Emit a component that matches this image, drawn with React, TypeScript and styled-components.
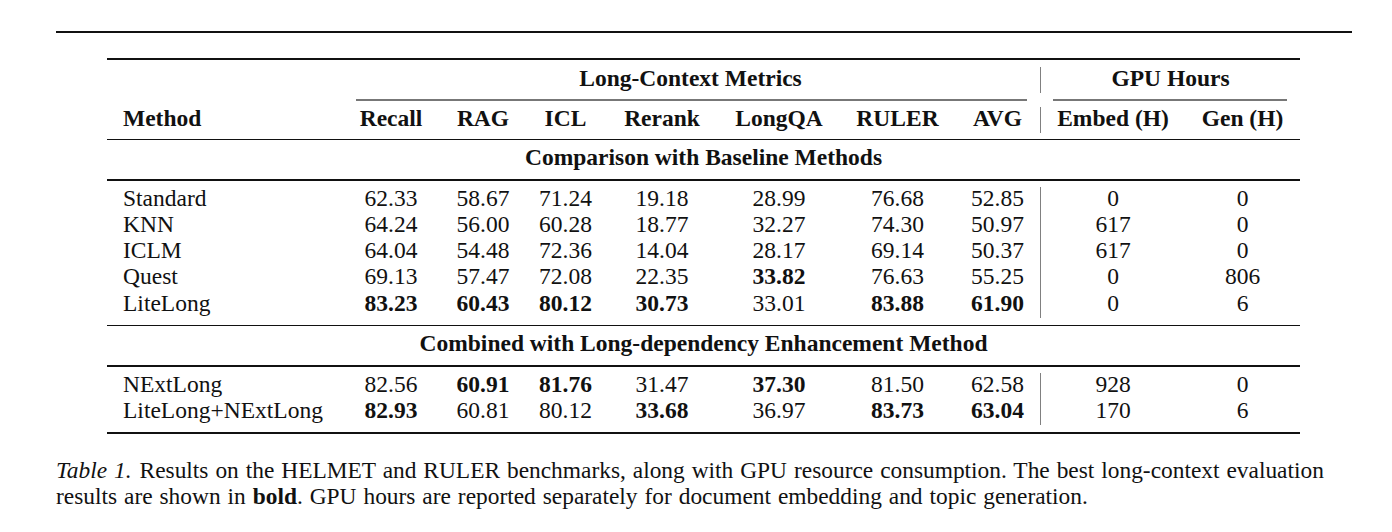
import styled, { createGlobalStyle } from 'styled-components';

const GlobalStyle = createGlobalStyle`
  body {
    margin: 0;
    background: #fff;
    color: #111;
    font-family: "Liberation Serif", "Times New Roman", serif;
  }
`;

interface ResultRow {
  method: string;
  values: string[];
  bold: number[];
  embed: string;
  gen: string;
}

const columnWidths = [234, 100, 84, 81, 112, 122, 115, 85, 145, 115];
const metrics = ['Recall', 'RAG', 'ICL', 'Rerank', 'LongQA', 'RULER', 'AVG'];

const baseline: ResultRow[] = [
  { method: 'Standard', values: ['62.33', '58.67', '71.24', '19.18', '28.99', '76.68', '52.85'], bold: [], embed: '0', gen: '0' },
  { method: 'KNN', values: ['64.24', '56.00', '60.28', '18.77', '32.27', '74.30', '50.97'], bold: [], embed: '617', gen: '0' },
  { method: 'ICLM', values: ['64.04', '54.48', '72.36', '14.04', '28.17', '69.14', '50.37'], bold: [], embed: '617', gen: '0' },
  { method: 'Quest', values: ['69.13', '57.47', '72.08', '22.35', '33.82', '76.63', '55.25'], bold: [4], embed: '0', gen: '806' },
  { method: 'LiteLong', values: ['83.23', '60.43', '80.12', '30.73', '33.01', '83.88', '61.90'], bold: [0, 1, 2, 3, 5, 6], embed: '0', gen: '6' },
];

const combined: ResultRow[] = [
  { method: 'NExtLong', values: ['82.56', '60.91', '81.76', '31.47', '37.30', '81.50', '62.58'], bold: [1, 2, 4], embed: '928', gen: '0' },
  { method: 'LiteLong+NExtLong', values: ['82.93', '60.81', '80.12', '33.68', '36.97', '83.73', '63.04'], bold: [0, 3, 5, 6], embed: '170', gen: '6' },
];

function Rule({ heavy, above = 6, below = 6 }: { heavy?: boolean; above?: number; below?: number }) {
  return (
    <tr>
      <RuleCell colSpan={10}>
        <Line $heavy={heavy} $above={above} $below={below} />
      </RuleCell>
    </tr>
  );
}

function DataRows({ rows }: { rows: ResultRow[] }) {
  return (
    <>
      {rows.map((row) => (
        <tr key={row.method}>
          <MethodCell>{row.method}</MethodCell>
          {row.values.map((v, i) => (
            <Cell key={metrics[i]} $bold={row.bold.includes(i)}>
              {v}
            </Cell>
          ))}
          <Cell $divider>{row.embed}</Cell>
          <Cell>{row.gen}</Cell>
        </tr>
      ))}
    </>
  );
}

export default function App() {
  return (
    <Page>
      <GlobalStyle />
      <PageRule />
      <Table>
        <colgroup>
          {columnWidths.map((w, i) => (
            <col key={i} style={{ width: w }} />
          ))}
        </colgroup>
        <tbody>
          <Rule heavy above={0} below={7} />
          <tr>
            <Cell />
            <Cell colSpan={7} $bold>
              Long-Context Metrics
            </Cell>
            <Cell colSpan={2} $bold $divider>
              GPU Hours
            </Cell>
          </tr>
          <tr>
            <RuleCell />
            <RuleCell colSpan={7}>
              <PartialLine $left={15} $right={13} />
            </RuleCell>
            <RuleCell colSpan={2}>
              <PartialLine $left={13} $right={13} />
            </RuleCell>
          </tr>
          <tr>
            <MethodCell $bold>Method</MethodCell>
            {metrics.map((m) => (
              <Cell key={m} $bold>
                {m}
              </Cell>
            ))}
            <Cell $bold $divider>
              Embed (H)
            </Cell>
            <Cell $bold>Gen (H)</Cell>
          </tr>
          <Rule />
          <tr>
            <SectionCell colSpan={10}>Comparison with Baseline Methods</SectionCell>
          </tr>
          <Rule above={7} />
          <DataRows rows={baseline} />
          <Rule above={7} />
          <tr>
            <SectionCell colSpan={10}>Combined with Long-dependency Enhancement Method</SectionCell>
          </tr>
          <Rule above={7} />
          <DataRows rows={combined} />
          <Rule heavy above={7} below={0} />
        </tbody>
      </Table>
      <Caption>
        <em>Table 1.</em> Results on the HELMET and RULER benchmarks, along with GPU resource
        consumption. The best long-context evaluation
        <br />
        results are shown in <b>bold</b>. GPU hours are reported separately for document embedding
        and topic generation.
      </Caption>
    </Page>
  );
}

const Page = styled.div`
  width: 1296px;
  padding: 31px 0 0 56px;
`;

const PageRule = styled.div`
  height: 2px;
  background: #111;
`;

const Table = styled.table`
  width: 1193px;
  margin: 25px 0 0 51px;
  border-collapse: separate;
  border-spacing: 0;
  table-layout: fixed;
  font-size: 23.5px;
`;

const Cell = styled.td<{ $bold?: boolean; $divider?: boolean }>`
  padding: 0 0 4.25px;
  line-height: 22px;
  text-align: center;
  white-space: nowrap;
  font-weight: ${(props) => (props.$bold ? 700 : 400)};
  border-left: ${(props) => (props.$divider ? '1.5px solid #808080' : 'none')};
`;

const MethodCell = styled(Cell)`
  text-align: left;
  padding-left: 16px;
`;

const SectionCell = styled(Cell)`
  font-weight: 700;
`;

const RuleCell = styled.td`
  padding: 0;
`;

const Line = styled.div<{ $heavy?: boolean; $above: number; $below: number }>`
  height: ${(props) => (props.$heavy ? '2px' : '1.3px')};
  margin: ${(props) => `${props.$above}px 0 ${props.$below}px`};
  background: #111;
`;

const PartialLine = styled.div<{ $left: number; $right: number }>`
  height: 1.3px;
  margin: ${(props) => `6px ${props.$right}px 6px ${props.$left}px`};
  background: #777;
`;

const Caption = styled.p`
  margin: 23px 0 0;
  font-size: 23.4px;
  line-height: 26px;
  word-spacing: 1.1px;

  em {
    font-style: italic;
    margin-right: 1px;
  }
`;
